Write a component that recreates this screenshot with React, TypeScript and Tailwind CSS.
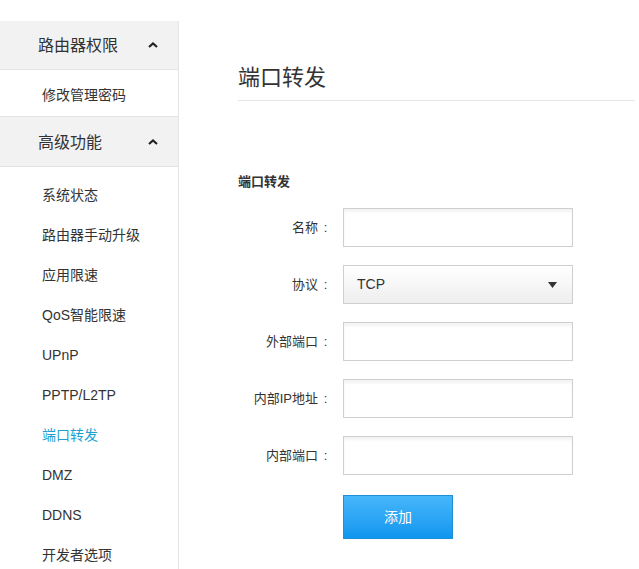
import { useState } from "react";

const groups = [
  { title: "路由器权限", items: ["修改管理密码"] },
  {
    title: "高级功能",
    items: [
      "系统状态",
      "路由器手动升级",
      "应用限速",
      "QoS智能限速",
      "UPnP",
      "PPTP/L2TP",
      "端口转发",
      "DMZ",
      "DDNS",
      "开发者选项",
    ],
  },
];

const Caret = () => (
  <svg width="10" height="6" viewBox="0 0 10 6" className="text-[#222]">
    <polyline points="1,5 5,1.5 9,5" fill="none" stroke="currentColor" strokeWidth="2.2" />
  </svg>
);

const fields = [
  { key: "name", label: "名称" },
  { key: "proto", label: "协议" },
  { key: "outPort", label: "外部端口" },
  { key: "ip", label: "内部IP地址" },
  { key: "inPort", label: "内部端口" },
];

export default function App() {
  const active = "端口转发";
  const [form, setForm] = useState<Record<string, string>>({
    name: "",
    proto: "TCP",
    outPort: "",
    ip: "",
    inPort: "",
  });

  return (
    <div
      className="flex min-h-screen bg-white pt-[21px] text-[#333]"
      style={{ fontFamily: '"Liberation Sans", "Noto Sans CJK SC", sans-serif' }}
    >
      {/* sidebar */}
      <div className="w-[179px] shrink-0 border-r border-[#e5e5e5]">
        <div className="flex items-center h-[49px] pl-[38px] pr-[20px] bg-[#f2f2f2] border-b border-[#e3e3e3]">
          <span className="flex-1 text-[16px] pt-[2px]">{groups[0].title}</span>
          <Caret />
        </div>
        <div className="flex items-center h-[47px] pl-[42px] pt-[4px] text-[14px] border-b border-[#e3e3e3]">
          {groups[0].items[0]}
        </div>
        <div className="flex items-center h-[50px] pl-[38px] pr-[20px] bg-[#f2f2f2] border-b border-[#e3e3e3]">
          <span className="flex-1 text-[16px] pt-[3px]">{groups[1].title}</span>
          <Caret />
        </div>
        <div className="pt-[7px]">
          {groups[1].items.map((item) => (
            <div
              key={item}
              className={
                "flex items-center h-[40px] pl-[42px] pt-[2px] text-[14px] " +
                (item === active ? "text-[#1e9fd2]" : "text-[#333]")
              }
            >
              {item}
            </div>
          ))}
        </div>
      </div>

      {/* main */}
      <div className="flex-1 pl-[59px] pr-[4px] pt-[42px]">
        <div className="text-[22px] leading-[30px] pb-[7px] border-b border-[#e5e5e5]">端口转发</div>

        <div className="mt-[71px] text-[13px] font-bold leading-[20px]">端口转发</div>

        <div className="mt-[16px] flex flex-col gap-[18px]">
          {fields.map((f) => (
            <div key={f.key} className="flex items-center">
              <label className="w-[95px] flex justify-end text-[13px] text-[#333]">
                <span>{f.label}</span>
                <span className="w-[15px] text-center">:</span>
              </label>
              {f.key === "proto" ? (
                <div className="ml-[10px] w-[230px] h-[39px] border border-[#cfcfcf] bg-gradient-to-b from-white to-[#eeeeee] flex items-center pl-[13px] text-[14px]">
                  <span className="flex-1">{form.proto}</span>
                  <svg width="9" height="6" viewBox="0 0 9 6" className="mr-[15px]">
                    <polygon points="0,0 9,0 4.5,6" fill="#333" />
                  </svg>
                </div>
              ) : (
                <input
                  value={form[f.key]}
                  onChange={(e) => setForm({ ...form, [f.key]: e.target.value })}
                  className="ml-[10px] w-[230px] h-[39px] border border-[#cfcfcf] bg-white px-[10px] text-[14px] outline-none shadow-[inset_0_3px_3px_rgba(0,0,0,0.05)]"
                />
              )}
            </div>
          ))}
        </div>

        <div className="mt-[20px] pl-[105px]">
          <button className="w-[110px] h-[44px] border border-[#1f8fd6] bg-gradient-to-b from-[#45b6fa] to-[#0b96ef] text-white text-[14px]">
            添加
          </button>
        </div>
      </div>
    </div>
  );
}
